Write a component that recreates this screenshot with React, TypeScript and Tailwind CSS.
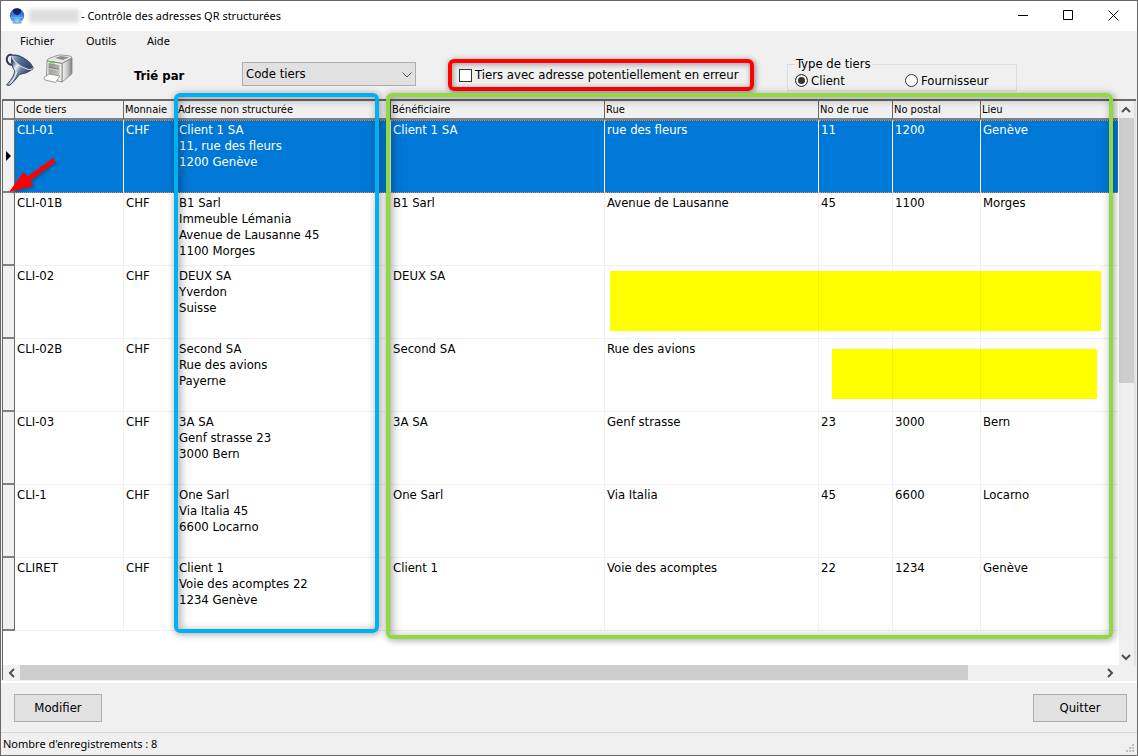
import { ReactNode } from "react";

type Row = {
  code: string;
  address: string[];
  name: string;
  street: string;
  no: string;
  zip: string;
  city: string;
};

const rows: Row[] = [
  { code: "CLI-01", address: ["Client 1 SA", "11, rue des fleurs", "1200 Genève"], name: "Client 1 SA", street: "rue des fleurs", no: "11", zip: "1200", city: "Genève" },
  { code: "CLI-01B", address: ["B1 Sarl", "Immeuble Lémania", "Avenue de Lausanne 45", "1100 Morges"], name: "B1 Sarl", street: "Avenue de Lausanne", no: "45", zip: "1100", city: "Morges" },
  { code: "CLI-02", address: ["DEUX SA", "Yverdon", "Suisse"], name: "DEUX SA", street: "", no: "", zip: "", city: "" },
  { code: "CLI-02B", address: ["Second SA", "Rue des avions", "Payerne"], name: "Second SA", street: "Rue des avions", no: "", zip: "", city: "" },
  { code: "CLI-03", address: ["3A SA", "Genf strasse 23", "3000 Bern"], name: "3A SA", street: "Genf strasse", no: "23", zip: "3000", city: "Bern" },
  { code: "CLI-1", address: ["One Sarl", "Via Italia 45", "6600 Locarno"], name: "One Sarl", street: "Via Italia", no: "45", zip: "6600", city: "Locarno" },
  { code: "CLIRET", address: ["Client 1", "Voie des acomptes 22", "1234 Genève"], name: "Client 1", street: "Voie des acomptes", no: "22", zip: "1234", city: "Genève" },
];

const headers = ["Code tiers", "Monnaie", "Adresse non structurée", "Bénéficiaire", "Rue", "No de rue", "No postal", "Lieu"];

function Globe() {
  return (
    <svg width="16" height="16" viewBox="0 0 16 16" aria-hidden="true">
      <defs>
        <radialGradient id="globe" cx="50%" cy="90%" r="90%">
          <stop offset="0" stopColor="#9adcff" />
          <stop offset="0.4" stopColor="#3f93e0" />
          <stop offset="1" stopColor="#2a5fae" />
        </radialGradient>
      </defs>
      <ellipse cx="8" cy="14.6" rx="5" ry="1.2" fill="#8fa3b5" />
      <circle cx="8" cy="7.6" r="7.2" fill="url(#globe)" />
      <path d="M4 1.4Q8-.8 12 1.400 13 6 8 7.200 3 6 4 1.400Z" fill="#14207c" />
      <path d="M2 9Q8 11.500 14 9" stroke="#7cc4f5" strokeWidth="0.8" fill="none" />
    </svg>
  );
}

function Funnel() {
  return (
    <svg width="30" height="34" viewBox="0 0 30 34" aria-hidden="true">
      <defs>
        <linearGradient id="cone" x1="0.1" y1="0.3" x2="0.8" y2="0.8">
          <stop offset="0" stopColor="#2c3b58" />
          <stop offset="0.3" stopColor="#eef3f9" />
          <stop offset="0.5" stopColor="#7486a2" />
          <stop offset="1" stopColor="#1f2c48" />
        </linearGradient>
        <linearGradient id="bowl" x1="0" y1="0" x2="1" y2="0">
          <stop offset="0" stopColor="#a9b9d0" />
          <stop offset="0.35" stopColor="#5c7096" />
          <stop offset="1" stopColor="#2c3d66" />
        </linearGradient>
      </defs>
      <path d="M8 11.500C2.500 12.500 .8 7 2.500 3.500 4 1.200 7 1.300 8.500 3" fill="none" stroke="#2b3a58" strokeWidth="2" />
      <path d="M6.500 3.500Q6 13 9.500 17.500 10 23 1.500 32L4.500 32.500Q10 28 14.500 21.500 22 20.500 28 16Z" fill="url(#cone)" stroke="#2b3a58" strokeWidth="0.9" />
      <ellipse cx="17.300" cy="9" rx="12" ry="4.300" transform="rotate(33 17.300 9)" fill="url(#bowl)" stroke="#d5dee8" strokeWidth="1.100" />
      <path d="M7 2.500C13 .8 25 7 28.300 15.500" fill="none" stroke="#34446a" strokeWidth="1.100" />
      <path d="M11.500 18.500Q11 24 5 30.500" fill="none" stroke="#f5f8fb" strokeWidth="1.100" />
    </svg>
  );
}

function Printer() {
  return (
    <svg width="30" height="30" viewBox="0 0 30 30" aria-hidden="true">
      <defs>
        <linearGradient id="front" x1="0" y1="0" x2="1" y2="1">
          <stop offset="0" stopColor="#8b8d88" />
          <stop offset="1" stopColor="#c9cac6" />
        </linearGradient>
        <linearGradient id="side" x1="0" y1="0" x2="1" y2="0">
          <stop offset="0" stopColor="#f6f6f6" />
          <stop offset="0.5" stopColor="#cbccc9" />
          <stop offset="1" stopColor="#80827f" />
        </linearGradient>
      </defs>
      <path d="M4 7Q4 5 6 4.500L14 1.500Q17 .8 19 1L27 2Q29 2.500 29 4L19 9.500Z" fill="#e6e6e4" stroke="#858782" strokeWidth="0.800" />
      <path d="M12 4 17.500 2 26 3.200 20 6Z" fill="#8c8e89" />
      <path d="M19 9.500 29 4V18.500Q29 20.500 27 21.500L19 28Z" fill="url(#side)" stroke="#80827e" strokeWidth="0.800" />
      <path d="M4 7 19 9.500V28L3.500 24Z" fill="#eeeeec" stroke="#777975" strokeWidth="0.800" />
      <path d="M5.500 9 16.500 11V22L5.500 20Z" fill="url(#front)" />
      <path d="M6 13.500 16 15.300" stroke="#64665f" strokeWidth="0.800" />
      <path d="M6 14.500 16 16.300" stroke="#dededb" strokeWidth="0.800" />
      <path d="M7 6.800 12 7.700 11.500 9.500 7 8.800Z" fill="#5fc832" />
      <path d="M1 23.500 6 20 17 22 12.500 28.500 2 26Z" fill="#fdfdfd" stroke="#858785" strokeWidth="0.800" />
    </svg>
  );
}

function Chevron({ d }: { d: string }) {
  return (
    <svg width="10" height="10" viewBox="0 0 10 10" aria-hidden="true">
      <path d={d} fill="none" stroke="#505050" strokeWidth="2" />
    </svg>
  );
}

function CaptionButton({ label, children }: { label: string; children: ReactNode }) {
  return (
    <button aria-label={label} className="flex h-full w-[45px] items-center justify-center">
      <svg width="11" height="11" viewBox="0 0 11 11" fill="none" stroke="#000" aria-hidden="true">
        {children}
      </svg>
    </button>
  );
}

function Cell({ selected, children }: { selected: boolean; children?: ReactNode }) {
  return (
    <td
      className={
        selected
          ? "border-y border-r border-y-[#ff8728] border-r-white p-0 pl-0.5 pt-px align-top [border-top-style:dotted] [border-bottom-style:dotted] last:border-r-0"
          : "border-r border-b border-[#f0f0f0] p-0 pl-0.5 pt-0.5 align-top last:border-r-0"
      }
    >
      {children}
    </td>
  );
}

function Grid() {
  return (
    <table className="w-full table-fixed border-separate border-spacing-0 text-[13px] leading-4">
      <colgroup>
        <col className="w-3" />
        <col className="w-[109px]" />
        <col className="w-[53px]" />
        <col className="w-[214px]" />
        <col className="w-[214px]" />
        <col className="w-[214px]" />
        <col className="w-[74px]" />
        <col className="w-[88px]" />
        <col />
      </colgroup>
      <thead>
        <tr className="h-[19px] bg-[#f0f0f0] text-left text-[11px]">
          <th aria-label="Sélection" className="border-r border-b-2 border-r-[#696969] border-b-[#808080] p-0" />
          {headers.map((h) => (
            <th key={h} className="overflow-hidden border-r border-b-2 border-r-[#696969] border-b-[#808080] p-0 pl-px font-normal whitespace-nowrap last:border-r-0">
              {h}
            </th>
          ))}
        </tr>
      </thead>
      <tbody>
        {rows.map((r, i) => {
          const sel = i === 0;
          return (
            <tr key={r.code} className={sel ? "h-[73px] bg-[#0078d7] text-white" : "h-[73px] text-black"}>
              <td className="border-r border-b-2 border-r-[#696969] border-b-[#808080] bg-[#f0f0f0] p-0 align-middle">
                {sel && (
                  <svg width="6" height="10" viewBox="0 0 6 10" className="ml-[3px]" aria-hidden="true">
                    <path d="M0 0 5 5 0 10Z" fill="#000" />
                  </svg>
                )}
              </td>
              <Cell selected={sel}>{r.code}</Cell>
              <Cell selected={sel}>CHF</Cell>
              <Cell selected={sel}>
                {r.address.map((line) => (
                  <div key={line}>{line}</div>
                ))}
              </Cell>
              <Cell selected={sel}>{r.name}</Cell>
              <Cell selected={sel}>{r.street}</Cell>
              <Cell selected={sel}>{r.no}</Cell>
              <Cell selected={sel}>{r.zip}</Cell>
              <Cell selected={sel}>{r.city}</Cell>
            </tr>
          );
        })}
      </tbody>
    </table>
  );
}

export default function App() {
  return (
    <div className="flex min-h-screen flex-col bg-[#696969] p-px font-['DejaVu_Sans_Condensed','Noto_Sans',sans-serif] text-[13px] text-black">
      <div className="flex grow flex-col bg-[#f0f0f0]">
        <header className="flex h-[30px] items-center bg-white pr-px pl-2 font-['Noto_Sans',sans-serif]">
          <Globe />
          <span className="ml-1 h-3.5 w-[50px] bg-[#dedede] blur-[2px]" />
          <h1 className="ml-0.5 text-[11px]">- Contrôle des adresses QR structurées</h1>
          <div className="ml-auto flex h-[29px] self-start">
            <CaptionButton label="Réduire">
              <path d="M0 5.500H10" />
            </CaptionButton>
            <CaptionButton label="Agrandir">
              <path d="M.5.5H9.500V9.500H.5Z" />
            </CaptionButton>
            <CaptionButton label="Fermer">
              <path d="M.5.5 10.500 10.500M10.500.5.5 10.500" />
            </CaptionButton>
          </div>
        </header>

        <nav className="flex h-5 items-center gap-[30px] pl-[19px] font-['Noto_Sans',sans-serif] text-[11px]">
          <button className="w-9 text-left">Fichier</button>
          <button className="w-[31px] text-left">Outils</button>
          <button>Aide</button>
        </nav>

        <div className="flex h-12 items-start pl-1">
          <button aria-label="Filtrer" className="mt-0.5 w-[30px]">
            <Funnel />
          </button>
          <button aria-label="Imprimer" className="mt-[3px] ml-2 w-[30px]">
            <Printer />
          </button>
          <label htmlFor="sort" className="mt-[15px] ml-[61px] w-[108px] font-bold">
            Trié par
          </label>
          <div className="relative mt-[11px]">
            <select id="sort" className="block h-6 w-[174px] appearance-none border border-[#adadad] bg-[#e1e1e1] pl-[3px]">
              <option>Code tiers</option>
            </select>
            <svg width="10" height="6" viewBox="0 0 10 6" className="pointer-events-none absolute top-[10px] right-1" aria-hidden="true">
              <path d="M.5.5 5 5 9.500.5" fill="none" stroke="#505050" />
            </svg>
          </div>
          <label className="mt-2 ml-8 flex h-8 w-[306px] items-center gap-[3px] rounded-md border-4 border-[#ff0000] pl-[7px] whitespace-nowrap shadow-[1px_1px_5px_1px_rgba(0,0,0,0.35),inset_1px_1px_5px_1px_rgba(0,0,0,0.3)]">
            <input type="checkbox" className="size-[13px] shrink-0 appearance-none border border-[#333] bg-white" />
            Tiers avec adresse potentiellement en erreur
          </label>
          <fieldset className="mt-[5px] ml-[33px] h-[35px] w-[230px] border border-[#dcdcdc] pl-[7px]">
            <legend className="h-4 px-px leading-4">Type de tiers</legend>
            <div className="flex h-[17px] items-center">
              <label className="flex w-[110px] items-center gap-[3px]">
                <input type="radio" name="kind" defaultChecked className="size-[13px] appearance-none rounded-full border border-[#333] bg-white checked:bg-[#333] checked:shadow-[inset_0_0_0_2px_#fff]" />
                Client
              </label>
              <label className="flex items-center gap-[3px]">
                <input type="radio" name="kind" className="size-[13px] appearance-none rounded-full border border-[#333] bg-white checked:bg-[#333] checked:shadow-[inset_0_0_0_2px_#fff]" />
                Fournisseur
              </label>
            </div>
          </fieldset>
        </div>

        <main className="relative mx-px flex grow flex-col border-t-2 border-l border-[#696969] bg-[#f0f0f0]">
          <div className="flex grow">
            <div className="grow bg-white pr-px">
              <Grid />
            </div>
            <div className="flex w-[18px] flex-col items-center border-r-2 border-r-[#e3e3e3] bg-[#f0f0f0]">
              <button aria-label="Monter" className="flex h-[17px] items-center">
                <Chevron d="M1 7 5 3 9 7" />
              </button>
              <div className="h-[265px] w-[15px] bg-[#cdcdcd]" />
              <button aria-label="Descendre" className="mt-auto flex h-[17px] items-center">
                <Chevron d="M1 3 5 7 9 3" />
              </button>
            </div>
          </div>
          <div className="flex h-[15px] items-center pr-[18px]">
            <button aria-label="Gauche" className="flex w-[17px] justify-center">
              <Chevron d="M7 1 3 5 7 9" />
            </button>
            <div className="h-full grow">
              <div className="h-full w-[87.7%] bg-[#cdcdcd]" />
            </div>
            <button aria-label="Droite" className="flex w-[17px] justify-center">
              <Chevron d="M3 1 7 5 3 9" />
            </button>
          </div>

          <div className="absolute top-[170px] left-[607px] h-[60px] w-[491px] bg-[#ffff00]">
            <div className="ml-[208px] h-full w-[163px] border-x border-[#f0f000]" />
          </div>
          <div className="absolute top-[248px] left-[829px] h-[50px] w-[265px] bg-[#ffff00]">
            <div className="ml-[60px] h-full w-[89px] border-x border-[#f0f000]" />
          </div>
          <div className="pointer-events-none absolute -top-[8px] left-[171px] h-[540px] w-[205px] rounded-md border-4 border-[#00b0f0] shadow-[1px_1px_6px_1px_rgba(0,0,0,0.3),inset_2px_2px_8px_1px_rgba(0,0,0,0.3)]" />
          <div className="pointer-events-none absolute -top-[8px] right-[23px] left-[383px] h-[546px] rounded-md border-4 border-[#92d840] shadow-[1px_1px_6px_1px_rgba(0,0,0,0.3),inset_2px_2px_8px_1px_rgba(0,0,0,0.3)]" />
          <svg width="56" height="44" viewBox="0 0 56 44" className="pointer-events-none absolute top-[54px] left-1" aria-hidden="true">
            <path d="M2 37 16.500 17 20.500 21.500 46 3 48.500 7 23.500 25.500 26 31Z" fill="#000" opacity="0.2" transform="translate(2 2)" className="blur-[1px]" />
            <path d="M2 37 16.500 17 20.500 21.500 46 3 48.500 7 23.500 25.500 26 31Z" fill="#ff0000" />
          </svg>
        </main>

        <footer>
          <div className="mt-px flex h-[51px] items-center justify-between border-t-2 border-white pr-[10px] pl-[13px]">
            <button className="h-7 w-[88px] border border-[#adadad] bg-[#e1e1e1]">Modifier</button>
            <button className="h-7 w-[94px] border border-[#adadad] bg-[#e1e1e1]">Quitter</button>
          </div>
          <div className="flex h-[23px] items-center justify-between border-t border-[#d7d7d7] pl-0.5 font-['Noto_Sans',sans-serif] text-[11px]">
            <span>Nombre d'enregistrements : 8</span>
            <svg width="9" height="9" viewBox="0 0 9 9" className="mt-auto mr-0.5 mb-0.5" fill="#bfbfbf" aria-hidden="true">
              <path d="M6 0h2v2h-2zM3 3h2v2h-2zM6 3h2v2h-2zM0 6h2v2h-2zM3 6h2v2h-2zM6 6h2v2h-2z" />
            </svg>
          </div>
        </footer>
      </div>
    </div>
  );
}
